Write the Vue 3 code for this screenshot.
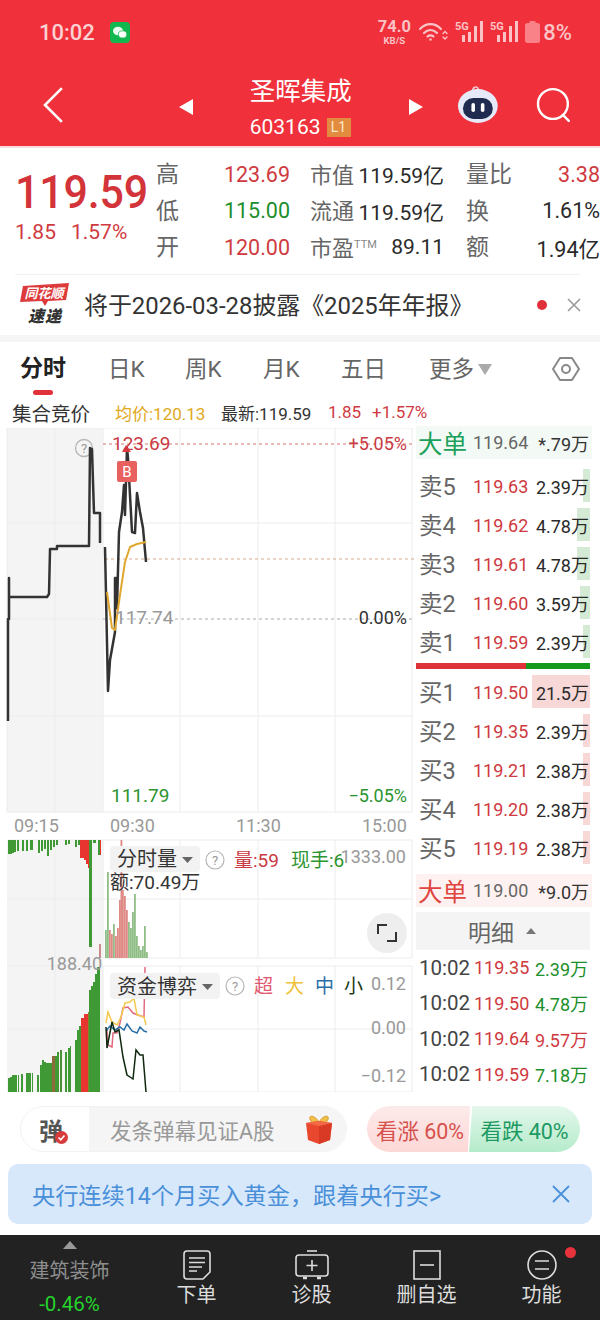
<script setup>
const quoteRows = [
  { l: '高', v: '123.69', c: 'red', l2: '市值', v2: '119.59亿', l3: '量比', v3: '3.38', c3: 'red' },
  { l: '低', v: '115.00', c: 'green', l2: '流通', v2: '119.59亿', l3: '换', v3: '1.61%', c3: 'dark' },
  { l: '开', v: '120.00', c: 'red', l2: '市盈', ttm: true, v2: '89.11', l3: '额', v3: '1.94亿', c3: 'dark' }
]
const tabs = ['日K', '周K', '月K', '五日']
const asks = [
  { l: '卖5', p: '119.63', v: '2.39万', w: 7 },
  { l: '卖4', p: '119.62', v: '4.78万', w: 13 },
  { l: '卖3', p: '119.61', v: '4.78万', w: 13 },
  { l: '卖2', p: '119.60', v: '3.59万', w: 10 },
  { l: '卖1', p: '119.59', v: '2.39万', w: 7 }
]
const bids = [
  { l: '买1', p: '119.50', v: '21.5万', w: 58 },
  { l: '买2', p: '119.35', v: '2.39万', w: 7 },
  { l: '买3', p: '119.21', v: '2.38万', w: 7 },
  { l: '买4', p: '119.20', v: '2.38万', w: 7 },
  { l: '买5', p: '119.19', v: '2.38万', w: 7 }
]
const ticks = [
  { p: '119.35', v: '2.39万', c: 'green' },
  { p: '119.50', v: '4.78万', c: 'green' },
  { p: '119.64', v: '9.57万', c: 'red' },
  { p: '119.59', v: '7.18万', c: 'green' }
]
const G = '#3f9a35'
const R = '#e8352f'
const hang = [
  [8, 2, 14, G], [10, 2, 14, G], [12, 2, 13, G], [14, 2, 12, G], [17, 2, 11, G], [22, 2, 11, G], [26, 2, 11, G], [30, 2, 10, G], [32, 1, 10, G],
  [38, 2, 13, G], [41, 2, 11, G], [44, 2, 9, G], [47, 2, 16, G], [50, 2, 10, G], [53, 2, 7, G], [56, 2, 5, G],
  [65, 2, 5, G], [68, 2, 4, G], [75, 2, 7, G], [78, 2, 5, G],
  [80, 2, 18, R], [82, 2, 18, R], [84, 2, 20, R], [86, 2, 24, R], [88, 1, 28, R], [89, 3, 107, G], [93, 3, 3, G], [98, 2, 15, G], [100, 1, 15, R]
]
const rise = [
  [8, 2, 14, G], [10, 2, 15, G], [12, 3, 17, G], [15, 2, 17, G], [18, 1, 17, G], [21, 2, 18, G], [26, 2, 19, G], [28, 3, 19, G], [32, 1, 19, G],
  [37, 2, 17, G], [40, 2, 27, G], [42, 2, 32, G], [44, 2, 30, G], [46, 2, 29, G], [48, 2, 29, G], [50, 2, 29, G], [52, 3, 36, '#8f6a3a'], [55, 2, 36, G], [57, 2, 40, G], [60, 2, 42, '#4c8f35'],
  [65, 2, 40, G], [68, 2, 44, G], [70, 1, 46, G], [75, 2, 52, G], [77, 2, 62, G], [79, 2, 66, G], [81, 3, 74, R], [84, 4, 78, R], [88, 1, 80, '#7c8a2c'],
  [89, 2, 102, G], [91, 2, 106, G], [93, 2, 110, G], [95, 2, 118, G], [97, 3, 125, G]
]
const VG = '#8fbd85'
const VR = '#df8a85'
const vol = [
  [105, 28, VG], [107, 86, VG], [109, 28, VR], [111, 24, VR], [113, 34, VG], [115, 22, VR], [117, 30, VR], [119, 58, VR], [120.5, 118, VR], [122, 68, VR], [124, 62, VR],
  [126, 48, VR], [128, 36, VG], [130, 30, VG], [132, 46, VG], [134, 64, VG], [136, 22, VG], [138, 12, VG], [140, 8, VG], [142, 12, VG], [144, 32, VG], [146, 6, VG]
]
const gridV = [55, 103, 180, 258, 335, 412]
</script>

<template>
  <div class="page">
    <header class="head">
      <div class="status">
        <div class="st-left">
          <span class="clock">10:02</span>
          <svg class="wx" width="20" height="21" viewBox="0 0 20 21">
            <rect width="20" height="21" rx="4" fill="#12b84f" />
            <ellipse cx="8" cy="9" rx="5" ry="4.2" fill="#e9fff0" />
            <ellipse cx="12.6" cy="12.4" rx="4.2" ry="3.6" fill="#fff" stroke="#12b84f" stroke-width=".8" />
          </svg>
        </div>
        <div class="st-right">
          <span class="speed"><b>74.0</b><i>KB/S</i></span>
          <svg width="30" height="22" viewBox="0 0 30 22" fill="none" stroke="#fbc3c6" stroke-width="2.2" stroke-linecap="round">
            <path d="M2 8 C8 1.500 17 1.500 23 8" />
            <path d="M6 12 C10 8 15 8 19 12" />
            <path d="M9.500 15.500 C11 14 14 14 15.500 15.500" />
            <circle cx="12.500" cy="18.500" r="1.200" fill="#fbc3c6" stroke="none" />
            <path d="M25 12.500 l2 -2 l2 2 M25 16 l2 2 l2 -2" stroke-width="1.400" />
          </svg>
          <svg v-for="n in 2" :key="n" width="28" height="24" viewBox="0 0 28 24" fill="#fbc3c6">
            <text x="0" y="10" font-size="11" font-weight="700" class="sig5g">5G</text>
            <rect x="7" y="15" width="3" height="7" /><rect x="13" y="12" width="3" height="10" /><rect x="19" y="6" width="3" height="16" /><rect x="25" y="1" width="3" height="21" />
          </svg>
          <svg width="15" height="22" viewBox="0 0 15 22">
            <rect x="4.500" y="0" width="6" height="3" rx="1" fill="#f98289" />
            <rect x="0" y="2" width="15" height="20" rx="2.500" fill="#f98289" />
          </svg>
          <span class="pct">8%</span>
        </div>
      </div>
      <div class="nav">
        <svg class="back" width="20" height="36" viewBox="0 0 20 36" fill="none" stroke="#fff" stroke-width="2.600"><path d="M19 1 L2 18 L19 35" /></svg>
        <div class="title-wrap">
          <span class="tri-l"></span>
          <div class="title">
            <div class="name">圣晖集成</div>
            <div class="code"><span>603163</span><em>L1</em></div>
          </div>
          <span class="tri-r"></span>
        </div>
        <svg class="robot" width="42" height="40" viewBox="0 0 42 40">
          <path d="M16 7 C15 2 19 1 21 3 L23 6" fill="none" stroke="#f6c6ca" stroke-width="1.500" />
          <ellipse cx="21" cy="21" rx="20" ry="17" fill="#e6eaf8" />
          <rect x="6" y="13" width="30" height="21" rx="10.500" fill="#1f2c4f" />
          <rect x="14.500" y="18" width="3.600" height="9" rx="1.800" fill="#fff" />
          <rect x="24" y="18" width="3.600" height="9" rx="1.800" fill="#fff" />
        </svg>
        <svg class="search" width="36" height="36" viewBox="0 0 36 36" fill="none" stroke="#fff" stroke-width="2.400" stroke-linecap="round"><circle cx="17" cy="17" r="15" /><path d="M27 28 L33 34" /></svg>
      </div>
    </header>

    <section class="quote">
      <div class="price-box">
        <div class="big">119.59</div>
        <div class="delta"><span>1.85</span><span>1.57%</span></div>
      </div>
      <div class="qgrid">
        <div v-for="r in quoteRows" :key="r.l" class="qrow">
          <span class="q-l">{{ r.l }}</span>
          <span class="q-v" :class="r.c">{{ r.v }}</span>
          <div class="q-mid">
            <span class="q-l2">{{ r.l2 }}<sup v-if="r.ttm">TTM</sup></span>
            <span class="q-v2">{{ r.v2 }}</span>
          </div>
          <span class="q-l q-l3">{{ r.l3 }}</span>
          <span class="q-v" :class="r.c3">{{ r.v3 }}</span>
        </div>
      </div>
    </section>

    <div class="hair"></div>

    <section class="notice">
      <div class="logo">
        <svg width="50" height="24" viewBox="0 0 50 24">
          <path d="M3 3 L49 0 L46 17 L28 18 L25 23 L22 18 L0 19 Z" fill="#dd3a3c" />
          <text x="24" y="14.500" class="logo-t" text-anchor="middle">同花顺</text>
        </svg>
        <span class="sudi">速递</span>
      </div>
      <div class="notice-text">将于2026-03-28披露《2025年年报》</div>
      <span class="dot"></span>
      <svg width="16" height="16" viewBox="0 0 16 16" stroke="#999" stroke-width="1.600"><path d="M2 2 L14 14 M14 2 L2 14" /></svg>
    </section>

    <nav class="tabs">
      <div class="tab active">分时<i></i></div>
      <div v-for="t in tabs" :key="t" class="tab">{{ t }}</div>
      <div class="tab more">更多<span></span></div>
      <svg class="hex" width="28" height="28" viewBox="0 0 28 28" fill="none" stroke="#888" stroke-width="2"><path d="M8 3 H20 L27 14 L20 25 H8 L1 14 Z" stroke-linejoin="round" /><circle cx="14" cy="14" r="4" /></svg>
    </nav>

    <div class="subhead">
      <span class="sh-a">集合竞价</span>
      <span class="sh-b">均价:120.13</span>
      <span class="sh-c">最新:119.59</span>
      <span class="sh-d">1.85</span>
      <span class="sh-e">+1.57%</span>
    </div>

    <main class="main">
      <svg class="chart" width="414" height="664" viewBox="0 428 414 664">
        <rect x="7" y="428" width="96" height="384" fill="#f4f4f4" />
        <rect x="7" y="840" width="96" height="252" fill="#f4f4f4" />
        <g stroke="#ececec" stroke-width="1">
          <path v-for="x in gridV" :key="x" :d="`M${x} 428 V812 M${x} 840 V958 M${x} 966 V1092`" />
          <path d="M7 428 H412 M7 523 H412 M7 716 H412 M7 812 H412 M7 840 H412 M7 899 H412 M103 958 H412 M7 966 H412 M7 1029 H412 M7 1092 H412" />
          <path d="M7 428 V812 M7 619 H103" />
        </g>
        <path d="M103 444 H414" stroke="#d9746f" stroke-dasharray="3 3" />
        <path d="M105 559 H414" stroke="#d8a98c" stroke-dasharray="3 3" />
        <path d="M103 619 H414" stroke="#aaa" stroke-dasharray="3 3" />

        <circle cx="84" cy="448" r="8.500" fill="none" stroke="#b5b5b5" stroke-width="1.300" />
        <text x="84" y="453" text-anchor="middle" class="t13 gray">?</text>

        <polyline fill="none" stroke="#333" stroke-width="2.500" stroke-linejoin="round" points="8,721 8,619 9,619 9,578 9,597 47,597 49,594 50,550 50,549 57,549 57,546 89,546 90,448 92,449 93,482 94,513 100,513 100,543" />
        <polyline fill="none" stroke="#333" stroke-width="2.500" stroke-linejoin="round" points="105,547 108,691 110,660 115,632 115,578 117,578 117,608 119,532 122,512 124,485 125,515 127,448 128,458 132,532 135,533 137,493 140,512 143,528 146,562" />
        <polyline fill="none" stroke="#e0a82e" stroke-width="2" stroke-linejoin="round" points="107,592 112,628 115,630 120,595 125,562 130,547 137,544 146,542" />
        <path d="M122 452 L126 445 L131 452 Z" fill="#dc3a3e" />

        <rect x="117" y="461" width="20" height="21" rx="2" fill="#e9615f" />
        <text x="127" y="477" text-anchor="middle" class="t15 white">B</text>

        <text x="112" y="450" class="t19 dred">123.69</text>
        <text x="407" y="450" text-anchor="end" class="t18 dred">+5.05%</text>
        <text x="115" y="624" class="t19 gray">117.74</text>
        <text x="407" y="624" text-anchor="end" class="t18 dk">0.00%</text>
        <text x="111" y="802" class="t19 grn">111.79</text>
        <text x="407" y="802" text-anchor="end" class="t18 grn">−5.05%</text>

        <text x="14" y="832" class="t18 gray">09:15</text>
        <text x="110" y="832" class="t18 gray">09:30</text>
        <text x="236" y="832" class="t18 gray">11:30</text>
        <text x="362" y="832" class="t18 gray">15:00</text>

        <rect v-for="b in hang" :key="'h' + b[0]" :x="b[0]" y="840" :width="b[1]" :height="b[2]" :fill="b[3]" />
        <rect v-for="b in vol" :key="'v' + b[0]" :x="b[0]" :y="958 - b[1]" width="1.800" :height="b[1]" :fill="b[2]" />
        <rect v-for="b in rise" :key="'r' + b[0]" :x="b[0]" :y="1092 - b[2]" :width="b[1]" :height="b[2]" :fill="b[3]" />
        <rect x="99" y="944" width="2" height="14" fill="#c98a8a" />

        <rect x="110" y="846" width="90" height="26" rx="4" fill="#f2f2f2" />
        <text x="117" y="866" class="t20 dk">分时量</text>
        <path d="M182 857 H193 L187.500 863 Z" fill="#666" />
        <circle cx="215" cy="860" r="9" fill="none" stroke="#b5b5b5" stroke-width="1.200" />
        <text x="215" y="865" text-anchor="middle" class="t13 gray">?</text>
        <text x="234" y="867" class="t19 dred">量:59</text>
        <text x="291" y="867" class="t19 grn">现手:6</text>
        <text x="406" y="863" text-anchor="end" class="t18 gray">1333.00</text>
        <text x="110" y="889" class="t19 dk">额:70.49万</text>

        <circle cx="387" cy="933" r="20" fill="#eeeeee" />
        <path d="M378 934 V925 H387 M396 932 V941 H387" fill="none" stroke="#333" stroke-width="2" />
        <text x="102" y="970" text-anchor="end" class="t18 gray">188.40</text>

        <polyline fill="none" stroke="#e26a80" stroke-width="1.500" points="107,1030 108,1045 112,1047 113,1033 117,1033 120,1023 123,1008 128,1007 133,1013 138,1015 144,1017 145,967" />
        <polyline fill="none" stroke="#f5c94d" stroke-width="1.500" points="106,1023 108,1012 112,1022 117,1025 121,1017 125,1003 130,1002 134,998 137,1015 144,1017 146,1025" />
        <polyline fill="none" stroke="#2a6fa8" stroke-width="1.500" points="106,1031 110,1026 115,1030 120,1027 124,1030 127,1024 132,1031 137,1033 140,1027 144,1031 147,1032" />
        <polyline fill="none" stroke="#10280f" stroke-width="1.500" points="106,1027 107,1048 112,1022 115,1032 119,1030 123,1057 127,1075 130,1077 133,1079 136,1050 140,1055 143,1055 146,1092" />

        <rect x="110" y="973" width="110" height="26" rx="4" fill="#f2f2f2" />
        <text x="117" y="994" class="t20 dk">资金博弈</text>
        <path d="M202 984 H213 L207.500 990 Z" fill="#666" />
        <circle cx="235" cy="986" r="9" fill="none" stroke="#b5b5b5" stroke-width="1.200" />
        <text x="235" y="991" text-anchor="middle" class="t13 gray">?</text>
        <text x="254" y="993" class="t19" fill="#e25a72">超</text>
        <text x="285" y="993" class="t19" fill="#eec23a">大</text>
        <text x="315" y="993" class="t19" fill="#2a6fa8">中</text>
        <text x="344" y="993" class="t19" fill="#1c3a18">小</text>
        <text x="406" y="990" text-anchor="end" class="t18 gray">0.12</text>
        <text x="406" y="1034" text-anchor="end" class="t18 gray">0.00</text>
        <text x="406" y="1082" text-anchor="end" class="t18 gray">−0.12</text>
      </svg>

      <div class="book">
        <div class="big-row up"><span class="b-l">大单</span><span class="b-p">119.64</span><span class="b-v">*.79万</span></div>
        <div class="asks">
          <div v-for="r in asks" :key="r.l" class="row">
            <i class="depth ask" :style="{ width: r.w + 'px' }"></i>
            <span class="r-l">{{ r.l }}</span><span class="r-p">{{ r.p }}</span><span class="r-v">{{ r.v }}</span>
          </div>
        </div>
        <div class="split"><i></i><b></b></div>
        <div class="bids">
          <div v-for="r in bids" :key="r.l" class="row">
            <i class="depth bid" :style="{ width: r.w + 'px' }"></i>
            <span class="r-l">{{ r.l }}</span><span class="r-p">{{ r.p }}</span><span class="r-v">{{ r.v }}</span>
          </div>
        </div>
        <div class="big-row dn"><span class="b-l">大单</span><span class="b-p">119.00</span><span class="b-v">*9.0万</span></div>
        <div class="detail-h">明细<span></span></div>
        <div v-for="(t, i) in ticks" :key="i" class="tick">
          <span class="t-t">10:02</span><span class="t-p">{{ t.p }}</span><span class="t-v" :class="t.c">{{ t.v }}</span>
        </div>
      </div>
    </main>

    <section class="danmu">
      <div class="pill">
        <div class="pill-l">
          <span class="dan">弹</span>
          <svg class="dan-b" width="13" height="13" viewBox="0 0 13 13"><circle cx="6.500" cy="6.500" r="6.500" fill="#d93a3a" /><path d="M3.500 6.500 L5.800 8.800 L9.500 4.500" fill="none" stroke="#fff" stroke-width="1.600" /></svg>
        </div>
        <div class="pill-r">
          <span>发条弹幕见证A股</span>
          <svg width="28" height="30" viewBox="0 0 28 30">
            <path d="M14 8 C8 -1 2 2 6 7 C8 9 11 9 14 8 C17 9 20 9 22 7 C26 2 20 -1 14 8 Z" fill="#efc04a" stroke="#d9952a" stroke-width="1" />
            <path d="M1 9 L14 7 L27 9 L25 26 L14 30 L3 26 Z" fill="#e9482f" />
            <path d="M14 12 L27 9 L25 26 L14 30 Z" fill="#d93a25" />
            <path d="M1 9 L14 12 L27 9 L14 7 Z" fill="#f26a45" />
          </svg>
        </div>
      </div>
      <div class="vote">
        <div class="bull">看涨 60%</div>
        <div class="bear">看跌 40%</div>
      </div>
    </section>

    <section class="banner">
      <span>央行连续14个月买入黄金，跟着央行买&gt;</span>
      <svg width="18" height="18" viewBox="0 0 18 18" stroke="#4a90d9" stroke-width="1.800"><path d="M1 1 L17 17 M17 1 L1 17" /></svg>
    </section>

    <footer class="foot">
      <div class="sector">
        <span class="up-tri"></span>
        <span class="sec-n">建筑装饰</span>
        <span class="sec-v">-0.46%</span>
      </div>
      <div class="fi">
        <svg width="28" height="30" viewBox="0 0 28 30" fill="none" stroke="#ddd" stroke-width="1.600"><path d="M4 1 H24 Q27 1 27 4 V22 L20 29 H4 Q1 29 1 26 V4 Q1 1 4 1 Z" /><path d="M6 8 H22 M6 12.500 H22 M6 17 H19 M6 21 H14" /></svg>
        <span>下单</span>
      </div>
      <div class="fi">
        <svg width="34" height="30" viewBox="0 0 34 30" fill="none" stroke="#ddd" stroke-width="1.600"><path d="M12 1 H22" /><rect x="1" y="5" width="32" height="21" rx="3" /><path d="M8 28 H12 M22 28 H26" stroke-width="2.400" /><path d="M17 10 V21 M11.500 15.500 H22.500" /></svg>
        <span>诊股</span>
      </div>
      <div class="fi">
        <svg width="28" height="30" viewBox="0 0 28 30" fill="none" stroke="#ddd" stroke-width="1.600"><rect x="1" y="1" width="26" height="28" /><path d="M7 15 H21" /></svg>
        <span>删自选</span>
      </div>
      <div class="fi">
        <svg width="30" height="30" viewBox="0 0 30 30" fill="none" stroke="#ddd" stroke-width="1.600"><circle cx="15" cy="15" r="14" /><path d="M8 11 H22 M8 19 H22" /></svg>
        <span>功能</span>
        <i class="fdot"></i>
      </div>
    </footer>
  </div>
</template>

<style>
html, body { margin: 0; background: #fff; }
</style>

<style scoped>
.page { width: 600px; height: 1320px; overflow: hidden; background: #fff; font-family: Roboto, "Noto Sans CJK SC", sans-serif; color: #222; }
.red { color: #cf3a40; }
.green { color: #1c8f2a; }
.dark { color: #2a2a2a; }

.head { height: 146px; background: #f0303a; border-bottom: 2px solid #f6dcdc; box-sizing: content-box; }
.status { height: 60px; padding: 4px 28px 0 39px; box-sizing: border-box; display: flex; justify-content: space-between; align-items: center; }
.st-left { display: flex; align-items: center; gap: 15px; }
.clock { font-size: 22px; color: #fbd0d2; font-weight: 500; }
.st-right { display: flex; align-items: center; gap: 7px; color: #fbc3c6; }
.speed { display: flex; flex-direction: column; align-items: center; line-height: 1; width: 32px; margin-right: 1px; }
.speed b { font-size: 16.500px; font-weight: 700; }
.speed i { font-style: normal; font-size: 9.500px; font-weight: 700; }
.sig5g { font-family: Roboto, sans-serif; }
.pct { font-size: 22px; font-weight: 500; margin-left: -4px; }
.nav { height: 86px; display: flex; align-items: center; padding: 4px 28px 0 43px; box-sizing: border-box; }
.title-wrap { display: flex; align-items: center; margin-left: 116px; width: 246px; justify-content: space-between; }
.tri-l, .tri-r { width: 0; height: 0; border-top: 8px solid transparent; border-bottom: 8px solid transparent; margin-top: 3px; }
.tri-l { border-right: 14px solid #fff; }
.tri-r { border-left: 14px solid #fff; }
.title { width: 103px; color: #fff; padding-top: 6px; }
.name { font-size: 25.500px; line-height: 32px; white-space: nowrap; }
.code { display: flex; align-items: center; gap: 6px; font-size: 21px; line-height: 28px; margin-top: 6px; }
.code em { font-style: normal; font-size: 14px; background: #e28c3f; color: #ffe9c8; padding: 0 3px; width: 24px; height: 19px; line-height: 19px; box-sizing: border-box; text-align: center; }
.robot { margin-left: 34px; }
.search { margin-left: 37px; }

.quote { display: flex; height: 126px; padding-left: 15px; }
.price-box { width: 141px; flex: none; }
.big { font-size: 43px; line-height: 50px; margin-top: 19px; color: #d3343a; font-weight: 500; white-space: nowrap; letter-spacing: -.2px; transform: scaleY(1.08); }
.delta { display: flex; gap: 15px; font-size: 21px; line-height: 26px; margin-top: 2px; color: #cf3a40; }
.qgrid { padding-top: 8px; }
.qrow { display: flex; align-items: center; height: 36.500px; width: 444px; white-space: nowrap; }
.q-l { width: 44px; flex: none; font-size: 23px; color: #666; margin-top: -4px; }
.q-v { width: 90px; flex: none; text-align: right; font-size: 21.500px; }
.q-mid { width: 134px; flex: none; margin-left: 20px; display: flex; justify-content: space-between; align-items: center; }
.q-l2 { font-size: 22px; color: #666; margin-top: -3px; }
.q-l2 sup { font-size: 11px; vertical-align: 8px; line-height: 0; color: #888; }
.q-v2 { font-size: 21px; color: #2a2a2a; }
.q-l3 { margin-left: 22px; }

.hair { height: 1px; margin: 0 20px 0 15px; background: #f1f1f1; }

.notice { height: 60px; display: flex; align-items: center; padding: 0 18px 0 20px; }
.logo { width: 50px; display: flex; flex-direction: column; align-items: center; margin-top: -2px; }
.logo-t { font-size: 13px; font-weight: 700; font-style: italic; fill: #fff; }
.sudi { font-size: 16px; line-height: 18px; font-weight: 900; font-style: italic; color: #333; letter-spacing: 1px; margin-top: 1px; }
.notice-text { margin-left: 14px; flex: 1; font-size: 23.900px; color: #333; white-space: nowrap; margin-top: -4px; }
.dot { width: 10px; height: 10px; border-radius: 50%; background: #e0313a; margin-right: 19px; }

.tabs { height: 54px; margin-top: 7px; display: flex; align-items: center; position: relative; font-size: 22.500px; color: #666; background: #fff; }
.tabs::before { content: ""; position: absolute; left: 0; right: 0; top: -7px; height: 7px; background: #f5f5f5; }
.tab { position: absolute; top: 13px; line-height: 28px; white-space: nowrap; }
.tab.active { left: 20px; font-weight: 700; color: #222; font-size: 23px; }
.tab.active i { position: absolute; left: 13px; top: 35px; width: 20px; height: 5px; border-radius: 3px; background: #e0313a; }
.tab:nth-child(2) { left: 108px; }
.tab:nth-child(3) { left: 185px; }
.tab:nth-child(4) { left: 263px; }
.tab:nth-child(5) { left: 341px; }
.tab.more { left: 429px; }
.more span { position: absolute; left: 49px; top: 9px; border-left: 7px solid transparent; border-right: 7px solid transparent; border-top: 11px solid #aaa; }
.hex { position: absolute; left: 552px; top: 13px; }

.subhead { height: 32px; border-top: 1px solid #eee; display: flex; align-items: center; padding-left: 12px; white-space: nowrap; box-sizing: border-box; margin-top: -1px; height: 33px; }
.sh-a { font-size: 19.500px; color: #333; width: 103px; }
.sh-b { font-size: 17px; color: #e0a820; width: 106px; }
.sh-c { font-size: 17px; color: #333; width: 107px; }
.sh-d { font-size: 17px; color: #cf3a40; width: 44px; }
.sh-e { font-size: 17px; color: #cf3a40; }

.main { display: flex; height: 664px; }
.chart { display: block; flex: none; font-family: Roboto, "Noto Sans CJK SC", sans-serif; }
.t13 { font-size: 13px; }
.t15 { font-size: 15px; }
.t18 { font-size: 18px; }
.t19 { font-size: 19px; }
.t20 { font-size: 20px; }
.gray { fill: #999; }
.white { fill: #fff; }
.dred { fill: #c93a42; }
.dk { fill: #333; }
.grn { fill: #2c9430; }

.book { width: 176px; margin-left: 2px; flex: none; }
.big-row { height: 33px; display: flex; align-items: center; white-space: nowrap; padding-right: 3px; }
.big-row.up { background: #f3faf5; margin-bottom: 7px; margin-top: -2px; }
.big-row.dn { background: #fdf2f1; margin-top: 7px; }
.b-l { width: 57px; padding-left: 2px; box-sizing: border-box; font-size: 24.500px; }
.up .b-l { color: #1aa05a; }
.dn .b-l { color: #e0453f; }
.b-p { font-size: 18px; color: #666; width: 62px; }
.b-v { font-size: 18px; color: #333; flex: 1; text-align: right; }
.row { height: 39px; display: flex; align-items: center; position: relative; white-space: nowrap; padding-right: 3px; }
.r-l, .r-p, .r-v { position: relative; }
.r-l { width: 57px; padding-left: 3px; box-sizing: border-box; font-size: 23.500px; color: #666; margin-top: -2px; }
.r-p { width: 62px; font-size: 18px; color: #cf3a40; margin-top: 1px; }
.r-v { flex: 1; text-align: right; font-size: 18px; color: #2a2a2a; }
.depth { position: absolute; right: 2px; top: 3px; height: 33px; }
.depth.ask { background: #d5ead4; }
.depth.bid { background: #f8d7d7; }
.split { display: flex; height: 6px; margin: 2px 2px 3px 0; }
.split i { width: 110px; background: #dc3238; }
.split b { flex: 1; background: #159a1e; }
.detail-h { height: 38px; margin-top: 5px; background: #f4f4f4; display: flex; align-items: center; justify-content: center; font-size: 23px; color: #666; margin-right: 2px; gap: 12px; padding-right: 2px; box-sizing: border-box; }
.detail-h span { border-left: 5px solid transparent; border-right: 5px solid transparent; border-bottom: 6px solid #777; }
.tick { height: 35.500px; display: flex; align-items: center; white-space: nowrap; padding-left: 3px; }
.t-t { width: 55px; font-size: 20.500px; color: #444; }
.t-p { width: 61px; font-size: 18px; color: #cf3a40; }
.t-v { font-size: 18px; }

.danmu { display: flex; height: 46px; margin-top: 14px; padding-left: 20px; }
.pill { width: 327px; height: 46px; display: flex; border-radius: 23px; overflow: hidden; border: 1px solid #f2f2f2; box-sizing: border-box; }
.pill-l { width: 68px; flex: none; position: relative; display: flex; align-items: center; justify-content: center; padding-right: 8px; box-sizing: border-box; }
.dan { font-size: 24px; font-weight: 700; color: #555; }
.dan-b { position: absolute; left: 34px; top: 24px; }
.pill-r { flex: 1; background: #f5f5f5; display: flex; align-items: center; justify-content: space-between; padding: 0 13px 0 21px; font-size: 21.500px; color: #999; white-space: nowrap; }
.vote { margin-left: 20px; display: flex; width: 213px; height: 46px; gap: 2px; border-radius: 23px; overflow: hidden; font-size: 21.500px; }
.bull { width: 103px; background: linear-gradient(180deg, #fdeaea, #fcd8d6); color: #d6504c; display: flex; align-items: center; justify-content: center; padding-left: 3px; box-sizing: border-box; white-space: nowrap; clip-path: polygon(0 0, 100% 0, 98% 100%, 0 100%); }
.bear { flex: 1; margin-left: -3px; background: linear-gradient(180deg, #e4f7ec, #b5ebcb); color: #1d9a62; display: flex; align-items: center; justify-content: center; white-space: nowrap; clip-path: polygon(3% 0, 100% 0, 100% 100%, 0 100%); }

.banner { margin: 12px 8px 0; height: 60px; border-radius: 10px; background: #d8e8fb; display: flex; align-items: center; justify-content: space-between; padding: 0 22px 0 24px; color: #4a90d9; font-size: 23.200px; white-space: nowrap; }

.foot { margin-top: 11px; height: 85px; background: #222; display: flex; }
.sector { width: 139px; flex: none; display: flex; flex-direction: column; align-items: center; }
.up-tri { margin-top: 6px; border-left: 7px solid transparent; border-right: 7px solid transparent; border-bottom: 8px solid #999; }
.sec-n { margin-top: 8px; font-size: 20px; line-height: 28px; color: #8e8e8e; }
.sec-v { margin-top: 5px; font-size: 20.500px; line-height: 28px; color: #25d42c; }
.fi { width: 115px; flex: none; display: flex; flex-direction: column; align-items: center; color: #ddd; font-size: 20px; padding-top: 15px; box-sizing: border-box; position: relative; }
.fi span { line-height: 30px; }
.fi svg { display: block; height: 30px; }
.fdot { position: absolute; left: 81px; top: 12px; width: 11px; height: 11px; border-radius: 50%; background: #e8323c; }
</style>
